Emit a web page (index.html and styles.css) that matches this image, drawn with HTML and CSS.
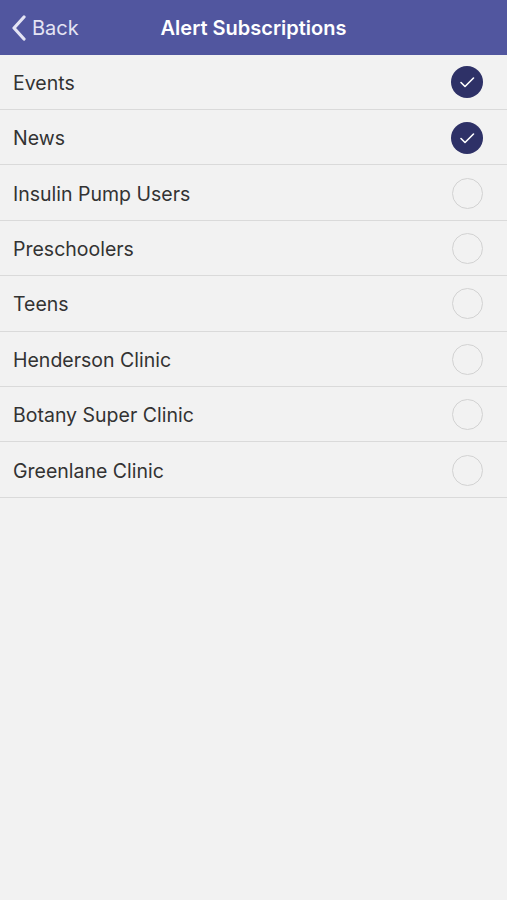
FILE: index.html
```html
<!DOCTYPE html>
<html>
<head>
<meta charset="utf-8">
<link rel="stylesheet" href="styles.css">
</head>
<body>
<header class="navbar">
  <div class="back">
    <svg class="chev" width="18" height="26" viewBox="0 0 18 26"><path d="M14 2 L4 13 L14 24" fill="none" stroke="#e4e4f4" stroke-width="3.2" stroke-linecap="round" stroke-linejoin="round"/></svg>
    <span>Back</span>
  </div>
  <div class="title">Alert Subscriptions</div>
</header>
<ul class="list">
  <li class="row"><span class="label">Events</span><span class="check on"><svg width="32" height="32" viewBox="0 0 32 32"><path d="M10 16.5 L14 20.5 L22.5 12" fill="none" stroke="#fff" stroke-width="1.6" stroke-linecap="round" stroke-linejoin="round"/></svg></span></li>
  <li class="row"><span class="label">News</span><span class="check on"><svg width="32" height="32" viewBox="0 0 32 32"><path d="M10 16.5 L14 20.5 L22.5 12" fill="none" stroke="#fff" stroke-width="1.6" stroke-linecap="round" stroke-linejoin="round"/></svg></span></li>
  <li class="row"><span class="label">Insulin Pump Users</span><span class="check"></span></li>
  <li class="row"><span class="label">Preschoolers</span><span class="check"></span></li>
  <li class="row"><span class="label">Teens</span><span class="check"></span></li>
  <li class="row"><span class="label">Henderson Clinic</span><span class="check"></span></li>
  <li class="row"><span class="label">Botany Super Clinic</span><span class="check"></span></li>
  <li class="row"><span class="label">Greenlane Clinic</span><span class="check"></span></li>
</ul>
</body>
</html>
```
FILE: styles.css
```css
html, body {
  margin: 0;
  padding: 0;
  background: #f2f2f2;
  font-family: "Inter", "Liberation Sans", sans-serif;
}
.navbar {
  position: relative;
  height: 54.6px;
  background: #51569f;
  display: flex;
  align-items: center;
  justify-content: center;
}
.back {
  position: absolute;
  left: 10px;
  top: 1px;
  height: 54px;
  display: flex;
  align-items: center;
  color: #e4e4f4;
  font-size: 20px;
}
.chev {
  margin-right: 4px;
}
.title {
  color: #ffffff;
  font-size: 20px;
  font-weight: 600;
  margin-left: 0;
  padding-top: 2px;
}
.list {
  list-style: none;
  margin: 0;
  padding: 0;
}
.row {
  height: 54.4px;
  border-bottom: 1px solid #dadada;
  display: flex;
  align-items: center;
  justify-content: space-between;
  padding: 0 24px 0 13px;
  font-size: 19.5px;
  color: #333333;
}
.label {
  padding-top: 2px;
}
.check {
  width: 29px;
  height: 29px;
  border-radius: 50%;
  border: 1.5px solid #d2d2d2;
  display: flex;
  align-items: center;
  justify-content: center;
  margin-top: 1px;
}
.check.on {
  width: 32px;
  height: 32px;
  border: none;
  background: #2e3167;
}
```
